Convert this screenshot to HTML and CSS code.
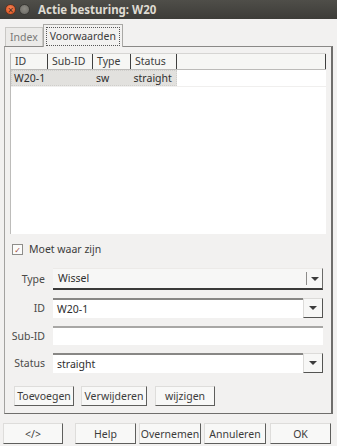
FILE: index.html
```html
<!DOCTYPE html>
<html lang="nl">
<head>
  <meta charset="UTF-8" />
  <title>Actie besturing: W20</title>
  <link rel="stylesheet" href="styles.css">
</head>
<body>
  <div class="titlebar">
    <span class="wbtn close">&#215;</span>
    <span class="wbtn min"></span>
    <span class="title">Actie besturing: W20</span>
  </div>

  <div class="tabs">
    <div class="tab">Index</div>
    <div class="tab active"><span class="focus">Voorwaarden</span></div>
  </div>

  <div class="panel">
    <div class="table">
      <div class="thead">
        <div class="col c-id">ID</div>
        <div class="col c-sub">Sub-ID</div>
        <div class="col c-type">Type</div>
        <div class="col c-status">Status</div>
        <div class="col c-rest"></div>
      </div>
      <div class="tbody">
        <div class="row">
          <div class="cells">
            <div class="col c-id">W20-1</div>
            <div class="col c-sub"></div>
            <div class="col c-type">sw</div>
            <div class="col c-status">straight</div>
          </div>
        </div>
      </div>
    </div>

    <label class="check">
      <span class="box">&#10003;</span>
      <span>Moet waar zijn</span>
    </label>

    <div class="form">
      <span class="lbl">Type</span>
      <div class="combo readonly">
        <span class="value">Wissel</span>
        <span class="arrow"><span class="tri"></span></span>
      </div>

      <span class="lbl">ID</span>
      <div class="combo editable">
        <span class="value">W20-1</span>
        <span class="arrow"><span class="tri"></span></span>
      </div>

      <span class="lbl">Sub-ID</span>
      <div class="field"></div>

      <span class="lbl">Status</span>
      <div class="combo editable">
        <span class="value">straight</span>
        <span class="arrow"><span class="tri"></span></span>
      </div>
    </div>

    <div class="actions">
      <button class="btn w-toev">Toevoegen</button>
      <button class="btn w-verw">Verwijderen</button>
      <button class="btn w-wijz">wijzigen</button>
    </div>
  </div>

  <div class="footer">
    <button class="btn f-code">&lt;/&gt;</button>
    <button class="btn f-help">Help</button>
    <button class="btn f-over">Overnemen</button>
    <button class="btn f-ann">Annuleren</button>
    <button class="btn f-ok">OK</button>
  </div>
</body>
</html>
```

FILE: styles.css
```css
* {
  margin: 0;
  padding: 0;
  box-sizing: border-box;
}

body {
  width: 337px;
  height: 446px;
  overflow: hidden;
  background: #f2f1f0;
  font-family: 'Noto Sans', 'DejaVu Sans', sans-serif;
  font-size: 10.5px;
  color: #3c3c3c;
  white-space: nowrap;
}

/* window title */
.titlebar {
  height: 19px;
  display: flex;
  align-items: center;
  padding-left: 5px;
  background: linear-gradient(#4f4e49, #3d3c38);
}

.wbtn {
  width: 11px;
  height: 11px;
  border-radius: 50%;
  display: flex;
  align-items: center;
  justify-content: center;
  font-size: 10px;
  line-height: 1;
  color: #4a2a1a;
}

.wbtn.close {
  background: radial-gradient(circle at 50% 40%, #f4845a, #de4e17);
  border: 1px solid #5a3626;
}

.wbtn.min {
  margin-left: 3px;
  background: radial-gradient(circle at 50% 40%, #8d8b84, #6a6862);
  border: 1px solid #3a3935;
}

.title {
  margin-left: 8px;
  font-weight: bold;
  font-size: 11.5px;
  color: #dfdbd2;
}

/* tabs */
.tabs {
  display: flex;
  align-items: flex-end;
  height: 27px;
  padding-left: 5px;
}

.tab {
  height: 19px;
  padding: 2px 4px 0 4px;
  border: 1px solid #c9c8c5;
  border-bottom: none;
  color: #7a7a78;
  background: #ebeae8;
}

.tab.active {
  height: 23px;
  padding: 2px 2px 0 2px;
  color: #3c3c3c;
  background: #f2f1f0;
  border-color: #a9a8a5;
  position: relative;
  top: 1px;
}

.tab .focus {
  display: block;
  padding: 1px 3px 2px 3px;
  border: 1px dotted #555;
}

/* tab panel */
.panel {
  margin: 0 4px 0 4px;
  height: 368px;
  border: 1px solid #a3a2a0;
  border-top-color: #8a8987;
  border-right: 2px solid #6f6e6c;
  border-bottom: 1px solid #6f6e6c;
  padding: 6px 5px 0 5px;
  display: flex;
  flex-direction: column;
}

.table {
  height: 181px;
  background: #fff;
  border-left: 1px solid #bdbcba;
  display: flex;
  flex-direction: column;
}

.thead {
  height: 17px;
  display: flex;
  background: #f6f6f4;
  border-top: 1px solid #d6d5d3;
  border-bottom: 1px solid #bcbbb9;
}

.thead .col {
  border-right: 1px solid #3f3f3e;
  padding-left: 4px;
  line-height: 15px;
}

.c-id { width: 37px; }
.c-sub { width: 45px; }
.c-type { width: 38px; }
.c-status { width: 46px; }
.c-rest { flex: 1; }

.tbody {
  flex: 1;
}

.row {
  height: 17px;
  border-bottom: 1px solid #f0efee;
}

.cells {
  width: 166px;
  height: 16px;
  display: flex;
  background: #e2e1de;
  border: 1px dotted #cfcecb;
}

.cells .col {
  padding-left: 2px;
  line-height: 14px;
  color: #2e2e2e;
}

.cells .c-type,
.cells .c-status {
  padding-left: 3px;
}

/* checkbox */
.check {
  display: flex;
  align-items: center;
  gap: 6px;
  margin: 9px 0 0 2px;
  height: 12px;
}

.check .box {
  width: 11px;
  height: 11px;
  border: 1px solid #8e8d8a;
  background: #fbfbfa;
  color: #a04a3a;
  font-size: 8px;
  line-height: 9px;
  text-align: center;
}

/* form grid */
.form {
  display: grid;
  grid-template-columns: 35px 270px;
  column-gap: 8px;
  row-gap: 8px;
  margin-top: 13px;
  align-items: center;
}

.lbl {
  text-align: right;
  color: #4a4a48;
}

.combo,
.field {
  height: 20px;
  display: flex;
  align-items: stretch;
}

.combo .value {
  flex: 1;
  padding-left: 4px;
  line-height: 18px;
  color: #2e2e2e;
}

.combo.readonly {
  height: 22px;
  background: #f7f7f6;
  border-top: 1px solid #eceae8;
  border-bottom: 2px solid #3a3a39;
  border-right: 1px solid #6a6a68;
}

.combo.readonly .value {
  padding-left: 5px;
  line-height: 19px;
}

.combo.readonly .arrow {
  width: 16px;
  border-left: 1px solid #8d8c8a;
  margin: 3px 0 3px 0;
}

.combo.editable .value {
  background: #fff;
  border-top: 2px solid #888785;
}

.combo.editable .arrow {
  width: 20px;
  background: #f7f7f6;
  border: 1px solid #dcdbd9;
  border-right-color: #545452;
  border-bottom-color: #545452;
}

.arrow {
  display: flex;
  align-items: center;
  justify-content: center;
}

.tri {
  width: 0;
  height: 0;
  border-left: 4px solid transparent;
  border-right: 4px solid transparent;
  border-top: 4px solid #3c3c3c;
}

.field {
  height: 19px;
  background: #fff;
  border-top: 2px solid #a8a7a5;
}

/* buttons */
.btn {
  font-family: inherit;
  font-size: 10.5px;
  color: #3c3c3c;
  background: #f8f8f7;
  border: 1px solid #dedddb;
  border-right-color: #5e5e5c;
  border-bottom-color: #5e5e5c;
  height: 20px;
}

.actions {
  display: flex;
  gap: 6px;
  margin: 13px 0 0 4px;
}

.w-toev { width: 60px; }
.w-verw { width: 66px; margin-left: 1px; }
.w-wijz { width: 60px; margin-left: 2px; }

.footer {
  display: flex;
  margin: 9px 0 0 3px;
  gap: 3px;
}

.footer .btn { height: 21px; }

.f-code { width: 60px; margin-right: 9px; }
.f-help { width: 61px; }
.f-over { width: 62px; }
.f-ann { width: 62px; }
.f-ok { width: 61px; margin-left: 1px; }
```
